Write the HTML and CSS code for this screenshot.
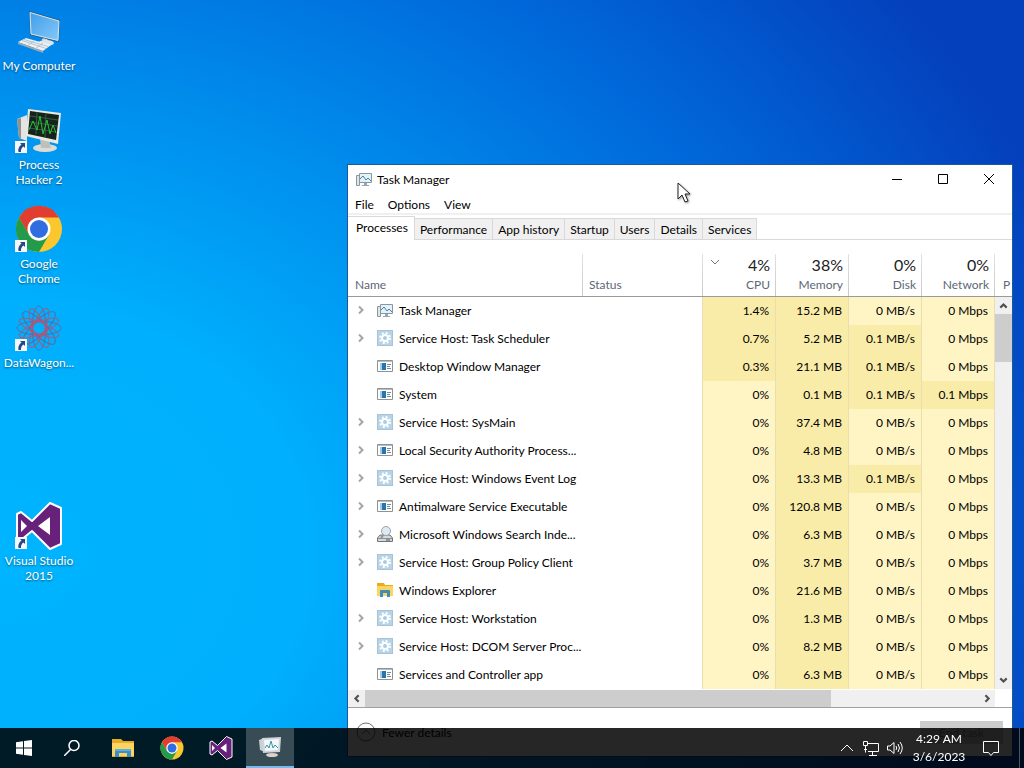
FILE: index.html
```
<!DOCTYPE html>
<html lang="en">
    <head>
        <meta charset="utf-8">
        <title>Desktop</title>
        <link rel="stylesheet" href="styles.css">
    </head>
    <body>
        <!-- shared icons -->
        <svg class="sprites" aria-hidden="true">
            <defs>
                <linearGradient id="glass" x1="0" y1="0" x2="1" y2="1">
                    <stop offset="0" stop-color="#3f9fe8"/>
                    <stop offset="1" stop-color="#84c8fa"/>
                </linearGradient>
            </defs>
            <symbol id="i-chevron" viewBox="0 0 12 12"><path d="M4 2.500L7.500 6 4 9.500" fill="none" stroke="#a6a6a6" stroke-width="2"/></symbol>
            <symbol id="i-taskmgr" viewBox="0 0 16 16">
                <path d="M.5 4.500h3v10h-3z" fill="#dfe5e8" stroke="#8b979e"/>
                <path d="M3.500 2.500h12v9h-12z" fill="#e6f1f7" stroke="#8b979e"/>
                <path d="M4 8l3-3 3 4 2-2 3 3" fill="none" stroke="#3e86a8"/>
                <path d="M8 12h3v2h2v1H6v-1h2z" fill="#9aa6ad"/>
            </symbol>
            <symbol id="i-gear" viewBox="0 0 16 16">
                <path d="M0 0h16v16H0z" fill="#a9c3d6"/>
                <path d="M1 1h14v14H1z" fill="#b7d3e8"/>
                <circle cx="8" cy="8" r="5" fill="none" stroke="#fff" stroke-width="2" stroke-dasharray="2 1.930"/>
                <circle cx="8" cy="8" r="3" fill="#a9cbe4" stroke="#fff" stroke-width="2"/>
            </symbol>
            <symbol id="i-app" viewBox="0 0 16 16">
                <path d="M.5 2.500h15v11H.5z" fill="#fff" stroke="#8d9296"/>
                <path d="M1 3h14v1H1z" fill="#b9bdc0"/>
                <path d="M3 5h2v7H3z" fill="#a5cde6"/>
                <path d="M5 5h4v7H5z" fill="#2a74ad"/>
                <path d="M10 6.500h4M10 8.500h3M10 10.500h4" stroke="#7b8b96"/>
            </symbol>
            <symbol id="i-indexer" viewBox="0 0 16 16">
                <path d="M3 9h10l2.500 3v3.500H.5V12z" fill="#d5d9db" stroke="#6e7478"/>
                <path d="M1 12.500h14" stroke="#8c9296"/>
                <path d="M9 14h4" stroke="#4a4f52"/>
                <path d="M7 8l-3 4" stroke="#8c9296" stroke-width="2"/>
                <circle cx="9" cy="5" r="4.500" fill="#dcebf3" stroke="#9aa4aa"/>
            </symbol>
            <symbol id="i-folder-small" viewBox="0 0 16 16">
                <path d="M0 1h7l1 2h8v11H0z" fill="#e9ab24"/>
                <path d="M0 4h16v10H0z" fill="#fcd462"/>
                <path d="M3 9q0-1 1-1h8q1 0 1 1v6h-3v-4H6v4H3z" fill="#3d8fb8"/>
            </symbol>
            <symbol id="i-folder" viewBox="0 0 24 20">
                <path d="M1 1h9l2 2h11v16H1z" fill="#e9ab24"/>
                <path d="M1 5h22v13H1z" fill="#fcd462"/>
                <path d="M4 11h16v8h-4v-4H8v4H4z" fill="#3d8fc4"/>
                <path d="M4 11h16v2H4z" fill="#5db0dd"/>
            </symbol>
            <symbol id="i-chrome" viewBox="0 0 48 48">
                <circle cx="24" cy="24" r="23" fill="#fbc72e"/>
                <path d="M4 12.500A23 23 0 0 1 44 12.500H24L14 30z" fill="#e13d30"/>
                <path d="M4 12.500L14 29.800 24 36l10-6.200L24 47A23 23 0 0 1 4 12.500z" fill="#249b4b"/>
                <circle cx="24" cy="24" r="11.500" fill="#fff"/>
                <circle cx="24" cy="24" r="9" fill="#2f6de0"/>
            </symbol>
            <symbol id="i-vs" viewBox="0 0 48 48">
                <path d="M2 12l4-2 11 9L35 1l11 5v36l-11 5-18-18-11 9-4-2z" fill="#68217a" stroke="#fff" stroke-width="2" stroke-linejoin="round"/>
                <path d="M35 15v18L23 24zM6 18v12l6-6z" fill="#fff"/>
            </symbol>
            <symbol id="i-shortcut" viewBox="0 0 12 12">
                <path d="M0 0h12v12H0z" fill="#f4f7fb"/>
                <path d="M5 2h5v5L8.500 5.500Q5.500 7.500 6 11H3.500Q2.500 6.500 6.500 3.500z" fill="#27497f"/>
            </symbol>
        </svg>

        <main class="desktop">
            <nav class="shortcuts">
                <a class="shortcut" href="#">
                    <svg viewBox="0 0 48 48">
                        <path d="M29 31l3 6" stroke="#cfd8df" stroke-width="5"/>
                        <ellipse cx="31" cy="36" rx="8" ry="3" fill="#dfe6ea"/>
                        <path d="M14 4l31 9-1 22-29-7z" fill="#28597f"/>
                        <path d="M15 5.500L44 14l-1 19.500L16 27z" fill="url(#glass)" stroke="#d9e6ee"/>
                        <path d="M3 35l8-4 25 7-8 6z" fill="#eef1f3"/>
                        <path d="M3 35l25 9v2L3 37z" fill="#9ba9b3"/>
                        <path d="M7 33.500l24 8M9 32.500l24 7M12 39l8-6M20 42l8-6" stroke="#b5c2cb"/>
                    </svg>
                    <span>My Computer</span>
                </a>
                <a class="shortcut" href="#">
                    <svg viewBox="0 0 48 48">
                        <path d="M2 13l10-4v26L4 32z" fill="#e4e4e0"/>
                        <path d="M2 13l4-1v21l-2-1z" fill="#8f938f"/>
                        <ellipse cx="30" cy="42" rx="12" ry="4" fill="#dcdcd6"/>
                        <path d="M25 33h9l2 9H26z" fill="#bfc0ba"/>
                        <path d="M13 3l33 4-3 31-32-8z" fill="#e9e9e2"/>
                        <path d="M15 5l29 4-3 25-28-6z" fill="#14241a"/>
                        <path d="M15 10l28 4M15 16l27 4M14 22l27 4M22 6l-1 22M31 7l-1 24" stroke="#3b5a45"/>
                        <path d="M14 24l4-9 4 9 3-14 3 18 4-14 3 14 3-9 3 8" fill="none" stroke="#27c23b"/>
                        <use href="#i-shortcut" x="0" y="35" width="12" height="12"/>
                    </svg>
                    <span>Process Hacker 2</span>
                </a>
                <a class="shortcut" href="#">
                    <svg viewBox="0 0 48 48">
                        <use href="#i-chrome" width="48" height="48"/>
                        <use href="#i-shortcut" x="0" y="35" width="12" height="12"/>
                    </svg>
                    <span>Google Chrome</span>
                </a>
                <a class="shortcut" href="#">
                    <svg viewBox="0 0 48 48">
                        <g fill="none" stroke="#4b6fae">
                            <ellipse cx="24" cy="24" rx="22" ry="7"/>
                            <ellipse cx="24" cy="24" rx="22" ry="7" transform="rotate(45 24 24)"/>
                            <ellipse cx="24" cy="24" rx="22" ry="7" transform="rotate(90 24 24)"/>
                            <ellipse cx="24" cy="24" rx="22" ry="7" transform="rotate(135 24 24)"/>
                        </g>
                        <g fill="none" stroke="#a45c7c">
                            <ellipse cx="24" cy="24" rx="21" ry="6" transform="rotate(22 24 24)"/>
                            <ellipse cx="24" cy="24" rx="21" ry="6" transform="rotate(67 24 24)"/>
                            <ellipse cx="24" cy="24" rx="21" ry="6" transform="rotate(112 24 24)"/>
                            <ellipse cx="24" cy="24" rx="21" ry="6" transform="rotate(157 24 24)"/>
                            <circle cx="24" cy="24" r="8" stroke="#c4506a" stroke-width="2" stroke-dasharray="3 2"/>
                        </g>
                        <use href="#i-shortcut" x="0" y="35" width="12" height="12"/>
                    </svg>
                    <span>DataWagon...</span>
                </a>
                <a class="shortcut shortcut-vs" href="#">
                    <svg viewBox="0 0 48 48">
                        <use href="#i-vs" width="48" height="48"/>
                        <use href="#i-shortcut" x="0" y="35" width="12" height="12"/>
                    </svg>
                    <span>Visual Studio 2015</span>
                </a>
            </nav>

            <section class="window">
                <header class="titlebar">
                    <svg class="icon"><use href="#i-taskmgr"/></svg>
                    <h1>Task Manager</h1>
                    <div class="controls">
                        <button aria-label="Minimize"><svg viewBox="0 0 12 12"><path d="M1 6.500h10"/></svg></button>
                        <button aria-label="Maximize"><svg viewBox="0 0 12 12"><path d="M1.500 1.500h9v9h-9z"/></svg></button>
                        <button aria-label="Close"><svg viewBox="0 0 12 12"><path d="M1 1l10 10M11 1L1 11"/></svg></button>
                    </div>
                </header>
                <nav class="menu">
                    <button>File</button>
                    <button>Options</button>
                    <button>View</button>
                </nav>
                <div class="tabs" role="tablist">
                    <button class="tab active" role="tab">Processes</button>
                    <button class="tab" role="tab">Performance</button>
                    <button class="tab" role="tab">App history</button>
                    <button class="tab" role="tab">Startup</button>
                    <button class="tab" role="tab">Users</button>
                    <button class="tab" role="tab">Details</button>
                    <button class="tab" role="tab">Services</button>
                </div>

                <div class="pane">
                    <table>
                        <colgroup>
                            <col>
                            <col class="col-status">
                            <col class="col-num">
                            <col class="col-num">
                            <col class="col-num">
                            <col class="col-num">
                            <col class="col-more">
                        </colgroup>
                        <thead>
                            <tr>
                                <th class="left">Name</th>
                                <th class="left">Status</th>
                                <th><svg class="sort" viewBox="0 0 10 6"><path d="M1 1l4 4 4-4" fill="none" stroke="#6b7680"/></svg><b>4%</b>CPU</th>
                                <th><b>38%</b>Memory</th>
                                <th><b>0%</b>Disk</th>
                                <th><b>0%</b>Network</th>
                                <th class="more">P</th>
                            </tr>
                        </thead>
                        <tbody>
                            <tr>
                                <td><div class="name"><button class="expand" aria-label="Expand"><svg><use href="#i-chevron"/></svg></button><svg class="icon"><use href="#i-taskmgr"/></svg>Task Manager</div></td>
                                <td></td><td class="warm">1.4%</td><td class="warm">15.2 MB</td><td>0 MB/s</td><td>0 Mbps</td><td></td>
                            </tr>
                            <tr>
                                <td><div class="name"><button class="expand" aria-label="Expand"><svg><use href="#i-chevron"/></svg></button><svg class="icon"><use href="#i-gear"/></svg>Service Host: Task Scheduler</div></td>
                                <td></td><td class="warm">0.7%</td><td class="warm">5.2 MB</td><td class="warm">0.1 MB/s</td><td>0 Mbps</td><td></td>
                            </tr>
                            <tr>
                                <td><div class="name"><span class="expand"></span><svg class="icon"><use href="#i-app"/></svg>Desktop Window Manager</div></td>
                                <td></td><td class="warm">0.3%</td><td class="warm">21.1 MB</td><td class="warm">0.1 MB/s</td><td>0 Mbps</td><td></td>
                            </tr>
                            <tr>
                                <td><div class="name"><span class="expand"></span><svg class="icon"><use href="#i-app"/></svg>System</div></td>
                                <td></td><td>0%</td><td class="warm">0.1 MB</td><td class="warm">0.1 MB/s</td><td class="warm">0.1 Mbps</td><td></td>
                            </tr>
                            <tr>
                                <td><div class="name"><button class="expand" aria-label="Expand"><svg><use href="#i-chevron"/></svg></button><svg class="icon"><use href="#i-gear"/></svg>Service Host: SysMain</div></td>
                                <td></td><td>0%</td><td class="warm">37.4 MB</td><td>0 MB/s</td><td>0 Mbps</td><td></td>
                            </tr>
                            <tr>
                                <td><div class="name"><button class="expand" aria-label="Expand"><svg><use href="#i-chevron"/></svg></button><svg class="icon"><use href="#i-app"/></svg>Local Security Authority Process...</div></td>
                                <td></td><td>0%</td><td class="warm">4.8 MB</td><td>0 MB/s</td><td>0 Mbps</td><td></td>
                            </tr>
                            <tr>
                                <td><div class="name"><button class="expand" aria-label="Expand"><svg><use href="#i-chevron"/></svg></button><svg class="icon"><use href="#i-gear"/></svg>Service Host: Windows Event Log</div></td>
                                <td></td><td>0%</td><td class="warm">13.3 MB</td><td class="warm">0.1 MB/s</td><td>0 Mbps</td><td></td>
                            </tr>
                            <tr>
                                <td><div class="name"><button class="expand" aria-label="Expand"><svg><use href="#i-chevron"/></svg></button><svg class="icon"><use href="#i-app"/></svg>Antimalware Service Executable</div></td>
                                <td></td><td>0%</td><td class="warm">120.8 MB</td><td>0 MB/s</td><td>0 Mbps</td><td></td>
                            </tr>
                            <tr>
                                <td><div class="name"><button class="expand" aria-label="Expand"><svg><use href="#i-chevron"/></svg></button><svg class="icon"><use href="#i-indexer"/></svg>Microsoft Windows Search Inde...</div></td>
                                <td></td><td>0%</td><td class="warm">6.3 MB</td><td>0 MB/s</td><td>0 Mbps</td><td></td>
                            </tr>
                            <tr>
                                <td><div class="name"><button class="expand" aria-label="Expand"><svg><use href="#i-chevron"/></svg></button><svg class="icon"><use href="#i-gear"/></svg>Service Host: Group Policy Client</div></td>
                                <td></td><td>0%</td><td class="warm">3.7 MB</td><td>0 MB/s</td><td>0 Mbps</td><td></td>
                            </tr>
                            <tr>
                                <td><div class="name"><span class="expand"></span><svg class="icon"><use href="#i-folder-small"/></svg>Windows Explorer</div></td>
                                <td></td><td>0%</td><td class="warm">21.6 MB</td><td>0 MB/s</td><td>0 Mbps</td><td></td>
                            </tr>
                            <tr>
                                <td><div class="name"><button class="expand" aria-label="Expand"><svg><use href="#i-chevron"/></svg></button><svg class="icon"><use href="#i-gear"/></svg>Service Host: Workstation</div></td>
                                <td></td><td>0%</td><td class="warm">1.3 MB</td><td>0 MB/s</td><td>0 Mbps</td><td></td>
                            </tr>
                            <tr>
                                <td><div class="name"><button class="expand" aria-label="Expand"><svg><use href="#i-chevron"/></svg></button><svg class="icon"><use href="#i-gear"/></svg>Service Host: DCOM Server Proc...</div></td>
                                <td></td><td>0%</td><td class="warm">8.2 MB</td><td>0 MB/s</td><td>0 Mbps</td><td></td>
                            </tr>
                            <tr>
                                <td><div class="name"><span class="expand"></span><svg class="icon"><use href="#i-app"/></svg>Services and Controller app</div></td>
                                <td></td><td>0%</td><td class="warm">6.3 MB</td><td>0 MB/s</td><td>0 Mbps</td><td></td>
                            </tr>
                        </tbody>
                    </table>
                    <div class="vscroll">
                        <svg viewBox="0 0 16 16"><path d="M5 10l3-3 3 3"/></svg>
                        <div class="thumb"></div>
                        <svg viewBox="0 0 16 16"><path d="M5 6l3 3 3-3"/></svg>
                    </div>
                </div>
                <div class="hscroll">
                    <svg viewBox="0 0 16 16"><path d="M10 5L7 8l3 3"/></svg>
                    <div class="track"><div class="thumb"></div></div>
                    <svg viewBox="0 0 16 16"><path d="M7 5l3 3-3 3"/></svg>
                </div>
                <footer class="actions">
                    <button class="fewer">
                        <svg viewBox="0 0 20 20"><circle cx="10" cy="10" r="9"/><path d="M6 12l4-4 4 4"/></svg>
                        Fewer details
                    </button>
                    <button class="end-task" disabled>End task</button>
                </footer>
            </section>

            <svg class="pointer" viewBox="0 0 14 22"><path d="M1 1v16l4-4 3 7 3-1-3-7h5z" fill="#fff" stroke="#222"/></svg>
        </main>

        <footer class="taskbar">
            <div class="system-buttons">
                <button aria-label="Start"><svg viewBox="0 0 16 16" width="16" height="16"><path d="M0 2.200L7 1.200v6.300H0zM8 1l8-1v7.500H8zM0 8.500h7v6.300L0 13.800zM8 8.500h8V16l-8-1z" fill="#fff"/></svg></button>
                <button aria-label="Search"><svg viewBox="0 0 16 16" width="16" height="16"><path d="M0 16l6.500-6.500" stroke="#fff" stroke-width="1.500"/><circle cx="10" cy="5.500" r="5" fill="none" stroke="#fff" stroke-width="1.500"/></svg></button>
            </div>
            <div class="apps">
                <button aria-label="File Explorer"><svg width="24" height="20"><use href="#i-folder"/></svg></button>
                <button aria-label="Google Chrome"><svg width="24" height="24"><use href="#i-chrome"/></svg></button>
                <button aria-label="Visual Studio"><svg width="24" height="24"><use href="#i-vs"/></svg></button>
                <button class="running" aria-label="Task Manager">
                    <svg viewBox="0 0 24 24" width="24" height="24">
                        <path d="M1 5l5-2 1 14-5-2z" fill="#c9d0d4"/>
                        <ellipse cx="14" cy="20" rx="6" ry="2" fill="#d9d3cc"/>
                        <path d="M4 3l19-1-1 15-17 1z" fill="#cfd5d8"/>
                        <path d="M6 5l15-1-1 11-13 1z" fill="#f2f8fa"/>
                        <path d="M7 13l2-3 2 3 2-7 2 7 2-3 3 3" fill="none" stroke="#3d92a8"/>
                    </svg>
                </button>
            </div>
            <div class="tray">
                <button aria-label="Hidden icons"><svg viewBox="0 0 16 16"><path d="M2 11l6-6 6 6"/></svg></button>
                <button aria-label="Network"><svg viewBox="0 0 16 16"><path d="M4 3.500h11.500v8H5M9.500 12v3M6 15.500h8M.5 1.500h4v4h-4zM2.500 6v6.500M1 9.500h3"/></svg></button>
                <button aria-label="Volume"><svg viewBox="0 0 16 16"><path d="M.5 6h2.500l4-3.500v11L3 10H.5zM9 6q1.500 2 0 4M11 4q3 4 0 8M13 2q4.500 6 0 12"/></svg></button>
                <button class="clock"><time>4:29 AM</time><time>3/6/2023</time></button>
                <button class="notify" aria-label="Notifications"><svg viewBox="0 0 18 18"><path d="M1.500 2.500h15v11h-5L9 16.500l-2.500-3h-5z"/></svg></button>
            </div>
        </footer>
    </body>
</html>
```
FILE: styles.css
```
* {
    box-sizing: border-box;
}
body {
    margin: 0;
    font-family: Lato, "Open Sans", sans-serif;
    font-size: 12px;
    color: #000;
}
button {
    font: inherit;
    color: inherit;
    background: none;
    border: 0;
    padding: 0;
}
svg {
    display: block;
    flex: none;
}
.sprites {
    position: absolute;
    width: 0;
    height: 0;
}
.icon {
    width: 16px;
    height: 16px;
}

/* desktop */
.desktop {
    position: relative;
    height: 100vh;
    overflow: hidden;
    background: radial-gradient(ellipse 108% 118% at 0% 72%, #00b4ff 0%, #00affd 28%, #008dec 52%, #0068da 76%, #0440bc 102%);
}
.shortcuts {
    display: grid;
    grid-auto-rows: 99px;
    width: 78px;
}
.shortcut {
    display: flex;
    flex-direction: column;
    align-items: center;
    gap: 3px;
    padding-top: 7px;
    color: #fff;
    line-height: 15px;
    text-align: center;
    text-decoration: none;
    text-shadow: 0 1px 2px rgba(0, 0, 0, .5);
}
.shortcut svg {
    width: 48px;
    height: 48px;
}
.shortcut-vs {
    grid-row: 6;
}
.pointer {
    position: absolute;
    left: 677px;
    top: 182px;
    width: 14px;
    height: 22px;
    filter: drop-shadow(1px 1px 1px rgba(0, 0, 0, .4));
}

/* window */
.window {
    position: absolute;
    left: 347px;
    top: 164px;
    right: 11px;
    bottom: 11px;
    display: flex;
    flex-direction: column;
    background: #fff;
    border: 1px solid #1b5a94;
}
.titlebar {
    display: flex;
    align-items: center;
    gap: 5px;
    height: 30px;
    padding: 0 0 2px 8px;
}
.titlebar h1 {
    margin: 0;
    font-size: 12px;
    font-weight: normal;
}
.controls {
    display: flex;
    margin-left: auto;
}
.controls button {
    display: grid;
    place-items: center;
    width: 46px;
    height: 28px;
}
.controls svg {
    width: 12px;
    height: 12px;
    fill: none;
    stroke: #000;
}
.menu {
    display: flex;
    gap: 14px;
    height: 20px;
    padding-left: 7px;
    border-bottom: 2px solid #f0f0f0;
}
.tabs {
    display: flex;
    align-items: flex-end;
    height: 25px;
    border-bottom: 1px solid #d9d9d9;
}
.tab {
    height: 21px;
    padding: 0 5px;
    background: #f0f0f0;
    border: 1px solid #d9d9d9;
    border-left: 0;
    border-bottom: 0;
}
.tab.active {
    height: 24px;
    margin-bottom: -1px;
    padding: 0 6px 2px 8px;
    background: #fff;
}

/* processes */
.pane {
    position: relative;
}
table {
    width: 100%;
    table-layout: fixed;
    border-collapse: separate;
    border-spacing: 0;
}
.col-status {
    width: 120px;
}
.col-num {
    width: 73px;
}
.col-more {
    width: 17px;
}
th {
    height: 57px;
    padding: 0 6px 1px;
    vertical-align: bottom;
    text-align: right;
    font-weight: normal;
    line-height: 20px;
    color: #5b6875;
    border-bottom: 1px solid #9a9a9a;
    background: linear-gradient(#e2e2e2, #c9c9c9) right bottom / 1px 42px no-repeat;
}
th b {
    display: block;
    font-size: 16px;
    font-weight: normal;
    color: #222;
}
th.left {
    text-align: left;
}
th:first-child {
    padding-left: 7px;
}
th.more {
    padding-left: 8px;
    overflow: hidden;
    background: none;
}
.sort {
    float: left;
    width: 10px;
    height: 6px;
    margin: 4px 0 0 1px;
}
td {
    height: 28px;
    padding: 0 6px 2px;
    text-align: right;
    white-space: nowrap;
    background: #fff4c4;
    border-right: 1px solid #e8deb0;
}
td.warm {
    background: #f9eca8;
}
td:first-child,
td:nth-child(2),
td:last-child {
    background: #fff;
    border-right: 0;
}
td:first-child {
    padding: 0 0 0 7px;
}
td:nth-child(2) {
    border-right: 1px solid #e8deb0;
}
.name {
    display: flex;
    align-items: center;
    gap: 6px;
    height: 26px;
    margin-bottom: 2px;
}
.expand {
    width: 12px;
    height: 12px;
    margin-right: 4px;
}
.expand svg {
    width: 12px;
    height: 12px;
}

/* scrollbars */
.vscroll {
    position: absolute;
    top: 57px;
    right: 0;
    bottom: 0;
    display: flex;
    flex-direction: column;
    width: 17px;
    background: #f0f0f0;
}
.vscroll svg,
.hscroll svg {
    width: 17px;
    height: 17px;
    fill: none;
    stroke: #505050;
    stroke-width: 2;
}
.vscroll .thumb {
    height: 48px;
    margin-bottom: auto;
    background: #cdcdcd;
}
.hscroll {
    display: flex;
    width: calc(100% - 17px);
    height: 17px;
    margin-top: 1px;
    background: #f0f0f0;
}
.hscroll .track {
    flex: 1;
}
.hscroll .thumb {
    width: 76%;
    height: 17px;
    background: #cdcdcd;
}
.actions {
    display: flex;
    flex: 1;
    align-items: center;
    justify-content: space-between;
    padding: 0 9px 0 8px;
    border-top: 1px solid #a0a0a0;
}
.fewer {
    display: flex;
    align-items: center;
    gap: 6px;
}
.fewer svg {
    width: 20px;
    height: 20px;
    fill: none;
    stroke: #707070;
}
.end-task {
    width: 83px;
    height: 23px;
    color: #838383;
    background: #ccc;
}

/* taskbar */
.taskbar {
    position: fixed;
    left: 0;
    right: 0;
    bottom: 0;
    display: flex;
    height: 40px;
    color: #fff;
    background: rgba(0, 0, 0, .85);
}
.system-buttons,
.apps {
    display: flex;
}
.apps {
    gap: 1px;
    margin-left: 3px;
}
.system-buttons button,
.apps button {
    display: grid;
    place-items: center;
    width: 48px;
    height: 40px;
}
.apps .running {
    background: rgba(255, 255, 255, .22);
    border-bottom: 2px solid #76b9ed;
}
.tray {
    display: flex;
    align-items: center;
    margin-left: auto;
    margin-right: 4px;
    padding-right: 8px;
    border-right: 1px solid #4a5560;
}
.tray button {
    display: grid;
    place-items: center;
    width: 24px;
    height: 40px;
}
.tray svg {
    width: 16px;
    height: 16px;
    fill: none;
    stroke: #fff;
}
.tray .clock {
    width: 64px;
    line-height: 18px;
    align-content: center;
}
.tray .notify {
    width: 40px;
}
.tray .notify svg {
    width: 18px;
    height: 18px;
}
```
